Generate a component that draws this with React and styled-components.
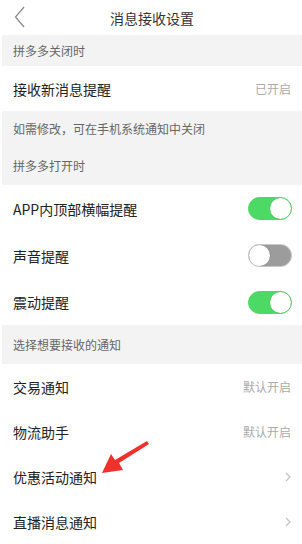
import React from 'react';
import styled, { createGlobalStyle } from 'styled-components';

const GlobalStyle = createGlobalStyle`
    body {
        margin: 0;
        background: #fff;
        font-family: "Noto Sans CJK SC", "Liberation Sans", sans-serif;
        color: #222;
    }
`;

const Page = styled.div`
    width: 302px;
    height: 544px;
    overflow: hidden;
    position: relative;
    padding-left: 2px;
    box-sizing: border-box;
`;

const TopBar = styled.div`
    height: 35px;
    display: flex;
    align-items: center;
    justify-content: center;
    position: relative;
    font-size: 14px;
    color: #333;
`;

const BackButton = styled.div`
    position: absolute;
    left: 12px;
    top: 6px;
    display: flex;
`;

const Section = styled.div`
    background: #f3f3f3;
    display: flex;
    flex-direction: column;
    justify-content: center;
    height: ${p => p.h}px;
    padding-left: 11px;
    font-size: 12px;
    color: #666;
`;

const Note = styled.div`
    height: ${p => p.h}px;
    display: flex;
    align-items: center;
`;

const Row = styled.div`
    display: flex;
    align-items: center;
    justify-content: space-between;
    height: ${p => p.h || 45}px;
    padding: 0 10px 0 11px;
    font-size: 14px;
    color: #222;
`;

const Tail = styled.span`
    font-size: 12px;
    color: #aaa;
    margin-right: 1px;
`;

const Toggle = styled.div`
    width: 44px;
    height: 23px;
    border-radius: 12px;
    box-sizing: border-box;
    background: ${p => (p.on ? '#4cd964' : '#9c9c9c')};
    border: 1px solid ${p => (p.on ? '#4cd964' : '#c8c8c8')};
    display: flex;
    justify-content: ${p => (p.on ? 'flex-end' : 'flex-start')};
    align-items: center;
`;

const Knob = styled.div`
    width: 21px;
    height: 21px;
    border-radius: 50%;
    background: #fff;
    box-shadow: 0 0 1px rgba(0, 0, 0, 0.3);
`;

const Chevron = () => (
    <svg width="8" height="12" viewBox="0 0 8 12">
        <path d="M2 2 L6 6 L2 10" stroke="#c4c4c4" strokeWidth="1.3" fill="none" />
    </svg>
);

const Arrow = styled.svg`
    position: absolute;
    left: 96px;
    top: 438px;
`;

export default function App() {
    return (
        <Page>
            <GlobalStyle />
            <TopBar>
                <BackButton>
                    <svg width="12" height="22" viewBox="0 0 12 22">
                        <path d="M10 1 L1.5 11 L10 21" stroke="#888" strokeWidth="1.2" fill="none" />
                    </svg>
                </BackButton>
                消息接收设置
            </TopBar>
            <Section h={31}>拼多多关闭时</Section>
            <Row h={45}>
                接收新消息提醒
                <Tail>已开启</Tail>
            </Row>
            <Section h={74}>
                <Note h={35}>如需修改，可在手机系统通知中关闭</Note>
                <Note h={39}>拼多多打开时</Note>
            </Section>
            <Row h={47}>
                APP内顶部横幅提醒
                <Toggle on><Knob /></Toggle>
            </Row>
            <Row h={47}>
                声音提醒
                <Toggle><Knob /></Toggle>
            </Row>
            <Row h={46}>
                震动提醒
                <Toggle on><Knob /></Toggle>
            </Row>
            <Section h={39}>选择想要接收的通知</Section>
            <Row>
                交易通知
                <Tail>默认开启</Tail>
            </Row>
            <Row>
                物流助手
                <Tail>默认开启</Tail>
            </Row>
            <Row>
                优惠活动通知
                <Chevron />
            </Row>
            <Row>
                直播消息通知
                <Chevron />
            </Row>
            <Arrow width="56" height="40" viewBox="0 0 56 40">
                <polygon points="51,3 53,6 23,25 27,32 6,35 15,16 19,22" fill="#f0302b" />
            </Arrow>
        </Page>
    );
}
